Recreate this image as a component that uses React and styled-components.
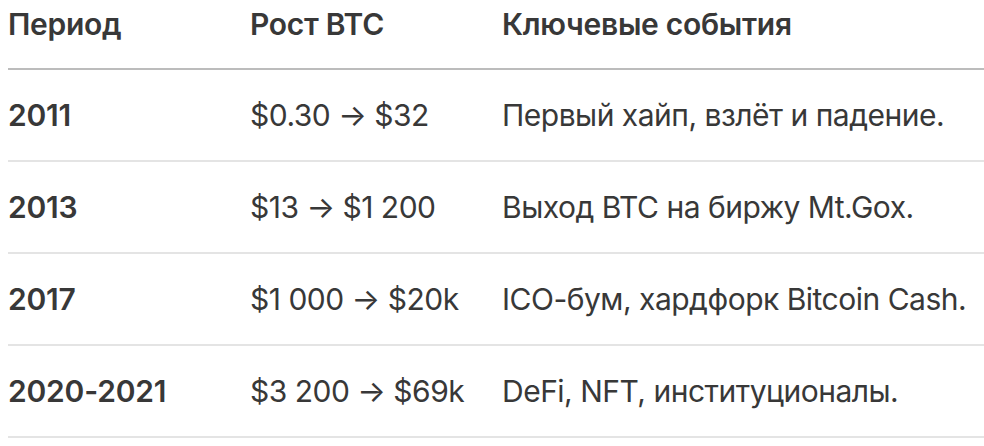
import React from 'react';
import styled, { createGlobalStyle } from 'styled-components';

const GlobalStyle = createGlobalStyle`
  html, body {
    margin: 0;
    padding: 0;
    background: #ffffff;
  }
  body {
    padding-left: 8px;
    font-family: Inter, 'Noto Sans', sans-serif;
    color: #383838;
  }
`;

const Table = styled.table`
  width: 100%;
  border-collapse: collapse;
  table-layout: fixed;
  font-size: 30px;
  line-height: 42px;
`;

const HeadCell = styled.th`
  width: ${(p) => p.width || 'auto'};
  padding: 3px 0 23px;
  text-align: left;
  font-weight: 600;
  letter-spacing: -0.3px;
  border-bottom: 2px solid #bcbcbc;
`;

const Row = styled.tr`
  border-bottom: 2px solid #e4e4e4;
`;

const Cell = styled.td`
  padding: 24px 0;
  font-weight: ${(p) => (p.strong ? 600 : 400)};
  letter-spacing: ${(p) => (p.strong ? '-0.2px' : '-0.5px')};
  white-space: nowrap;
`;

const rows = [
  { period: '2011', growth: '$0.30 → $32', events: 'Первый хайп, взлёт и падение.' },
  { period: '2013', growth: '$13 → $1 200', events: 'Выход BTC на биржу Mt.Gox.' },
  { period: '2017', growth: '$1 000 → $20k', events: 'ICO-бум, хардфорк Bitcoin Cash.' },
  { period: '2020-2021', growth: '$3 200 → $69k', events: 'DeFi, NFT, институционалы.' },
];

const App = () => {
  return (
    <>
      <GlobalStyle />
      <Table>
        <thead>
          <tr>
            <HeadCell width='242px'>Период</HeadCell>
            <HeadCell width='252px'>Рост BTC</HeadCell>
            <HeadCell>Ключевые события</HeadCell>
          </tr>
        </thead>
        <tbody>
          {rows.map((row) => (
            <Row key={row.period}>
              <Cell strong>{row.period}</Cell>
              <Cell>{row.growth}</Cell>
              <Cell>{row.events}</Cell>
            </Row>
          ))}
        </tbody>
      </Table>
    </>
  );
};

export default App;
